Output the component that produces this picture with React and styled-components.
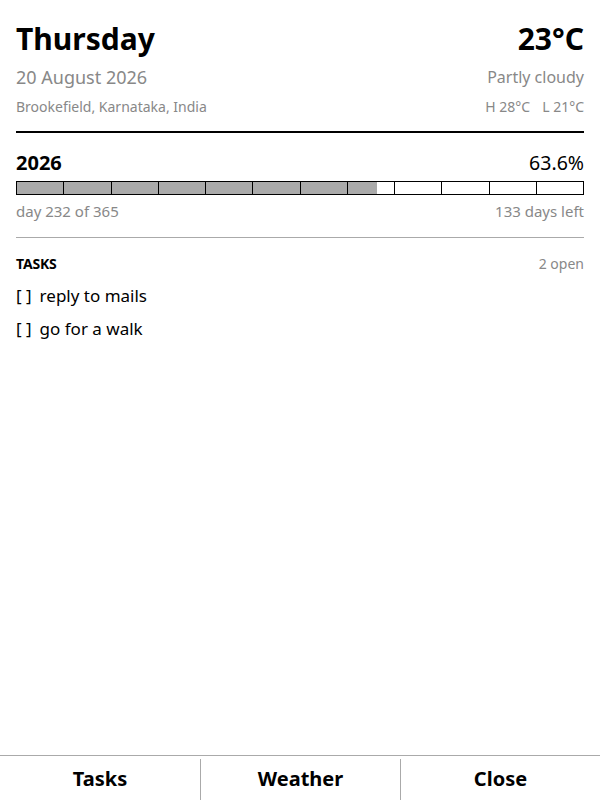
import React from "react";
import styled, { createGlobalStyle } from "styled-components";

const Global = createGlobalStyle`
  html, body { margin: 0; padding: 0; background: #fff; }
  body { font-family: "Noto Sans", "DejaVu Sans", sans-serif; color: #000; }
  * { box-sizing: border-box; }
`;

const Page = styled.div`
  height: 100vh;
  display: flex;
  flex-direction: column;
`;

const Main = styled.main`
  flex: 1;
  padding: 18px 16px 0;
  display: flex;
  flex-direction: column;
`;

const Header = styled.header`
  display: grid;
  grid-template-columns: 1fr auto;
  padding-bottom: 11px;
  border-bottom: 2px solid #000;
`;

const Title = styled.div`
  font-size: 30px;
  font-weight: 700;
  line-height: 42px;
  text-align: ${(p) => (p.$right ? "right" : "left")};
`;

const Sub = styled.div`
  font-size: ${(p) => (p.$right ? "16px" : "18px")};
  color: #888;
  line-height: 34px;
  text-align: ${(p) => (p.$right ? "right" : "left")};
`;

const Small = styled.div`
  font-size: 14px;
  color: #888;
  line-height: 26px;
  text-align: ${(p) => (p.$right ? "right" : "left")};
`;

const Gap = styled.span`
  display: inline-block;
  width: ${(p) => p.$w}px;
`;

const YearSection = styled.section`
  padding: 16px 0 15px;
  border-bottom: 1px solid #aaa;
`;

const Row = styled.div`
  display: flex;
  justify-content: space-between;
  align-items: baseline;
`;

const Year = styled.div`
  font-size: ${(p) => (p.$bold ? "20px" : "19.5px")};
  font-weight: ${(p) => (p.$bold ? 700 : 400)};
  line-height: 28px;
`;

const Bar = styled.div`
  display: flex;
  height: 14px;
  border: 1px solid #000;
  margin: 4px 0 5px;
`;

const Cell = styled.div`
  flex: 1;
  & + & { border-left: 1px solid #000; }
`;

const Fill = styled.div`
  height: 100%;
  background: #aaa;
`;

const Meta = styled.div`
  font-size: 15px;
  color: #888;
  line-height: 22px;
`;

const Tasks = styled.section`
  padding-top: 15px;
`;

const TasksLabel = styled.div`
  font-size: 14px;
  font-weight: 700;
  line-height: 22px;
  letter-spacing: -0.2px;
`;

const TasksCount = styled.div`
  font-size: 14px;
  color: #888;
  line-height: 22px;
`;

const TaskList = styled.div`
  margin-top: 4px;
`;

const Task = styled.div`
  font-size: 17px;
  line-height: 33px;
`;

const Box = styled.span`
  margin-right: 8px;
`;

const Footer = styled.footer`
  display: grid;
  grid-template-columns: repeat(3, 1fr);
  border-top: 1px solid #aaa;
  height: 45px;
  padding-top: 3px;
`;

const Btn = styled.button`
  font-family: inherit;
  font-size: 20px;
  font-weight: 700;
  background: none;
  border: none;
  color: #000;
  padding: 0 0 2px;
  & + & { border-left: 1px solid #aaa; }
`;

const pct = 0.636;
const cells = Array.from({ length: 12 }, (_, i) =>
  Math.max(0, Math.min(1, pct * 12 - i))
);

export default function App() {
  return (
    <>
      <Global />
      <Page>
        <Main>
          <Header>
            <Title>Thursday</Title>
            <Title $right>23°C</Title>
            <Sub>20 August 2026</Sub>
            <Sub $right>Partly cloudy</Sub>
            <Small>Brookefield, Karnataka, India</Small>
            <Small $right>H 28°C<Gap $w={12} />L 21°C</Small>
          </Header>
          <YearSection>
            <Row>
              <Year $bold>2026</Year>
              <Year>63.6%</Year>
            </Row>
            <Bar>
              {cells.map((f, i) => (
                <Cell key={i}>
                  <Fill style={{ width: `${f * 100}%` }} />
                </Cell>
              ))}
            </Bar>
            <Row>
              <Meta>day 232 of 365</Meta>
              <Meta>133 days left</Meta>
            </Row>
          </YearSection>
          <Tasks>
            <Row>
              <TasksLabel>TASKS</TasksLabel>
              <TasksCount>2 open</TasksCount>
            </Row>
            <TaskList>
              <Task><Box>[ ]</Box>reply to mails</Task>
              <Task><Box>[ ]</Box>go for a walk</Task>
            </TaskList>
          </Tasks>
        </Main>
        <Footer>
          <Btn>Tasks</Btn>
          <Btn>Weather</Btn>
          <Btn>Close</Btn>
        </Footer>
      </Page>
    </>
  );
}
